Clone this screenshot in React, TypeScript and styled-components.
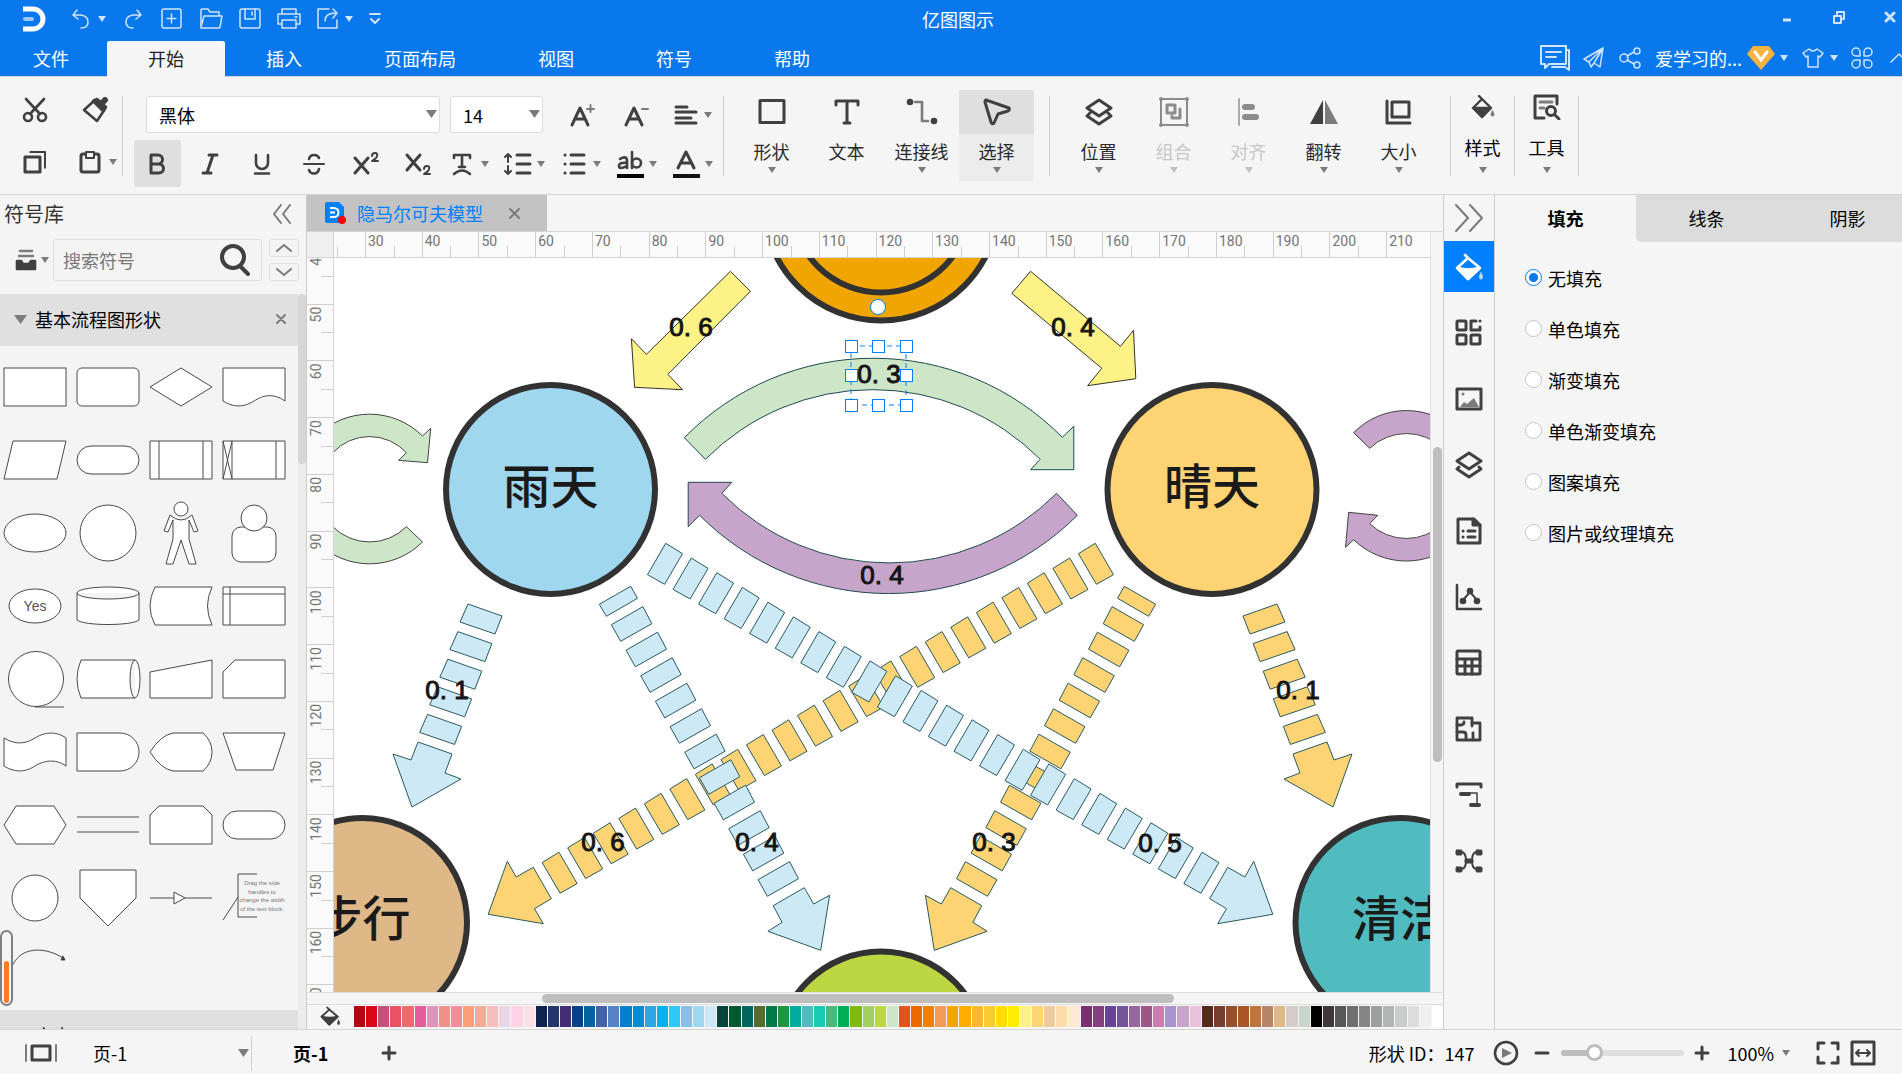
import React from "react";
import styled, { createGlobalStyle, css } from "styled-components";

const BLUE = "#0a78ed";
const ACCENT = "#0080ff";
const INK = "#404040";
const SOFT = "#7b7b7b";
const LINE = "#d4d4d4";
const PANEL = "#f5f5f5";
const FONT = `"Noto Sans CJK SC", "Noto Sans", sans-serif`;
const DIGITS = `Roboto, "Liberation Sans", sans-serif`;

const GlobalStyle = createGlobalStyle`
  * { box-sizing: border-box; }
  body { margin: 0; overflow: hidden; font-family: ${FONT}; font-size: 18px; color: #000; background: ${PANEL}; }
  button, input, select { font: inherit; color: inherit; }
  button { border: 0; padding: 0; background: none; cursor: pointer; }
  svg { display: block; flex: none; }
`;

/* ---------- shell ---------- */

const Shell = styled.div`
  display: flex;
  flex-direction: column;
  height: 100vh;
  overflow: hidden;
`;

const TitleBar = styled.header`
  display: grid;
  grid-template-columns: 1fr auto 1fr;
  height: 41px;
  background: ${BLUE};
  color: #fff;
`;

const QuickBar = styled.div`
  display: flex;
  align-items: center;
  gap: 15px;
  height: 38px;
  padding: 0 0 0 22px;
`;

const QuickGroup = styled.div<{ $after?: number }>`
  display: flex;
  align-items: center;
  gap: 5px;
  margin-right: ${(p) => p.$after ?? 0}px;
`;

const LogoBox = styled.span`
  display: flex;
  margin-right: 8px;
`;

const AppTitle = styled.h1`
  margin: 0;
  padding-left: 14px;
  font-size: 18px;
  line-height: 38px;
  font-weight: 400;
`;

const WindowButtons = styled.div`
  display: flex;
  justify-content: flex-end;
  gap: 27px;
  height: 34px;
`;

const IconButton = styled.button<{ $w?: number }>`
  display: flex;
  align-items: center;
  justify-content: center;
  width: ${(p) => p.$w ?? 24}px;
`;

const MenuBar = styled.nav`
  display: flex;
  justify-content: space-between;
  height: 35px;
  background: ${BLUE};
  color: #fff;
`;

const MenuTabs = styled.div`
  display: flex;
`;

const MenuTab = styled.button<{ $active?: boolean; $first?: boolean }>`
  position: relative;
  height: 36px;
  padding: ${(p) => (p.$first ? "0 38px 2px 33px" : "0 41px 2px")};
  line-height: 34px;
  color: ${(p) => (p.$active ? "#222" : "#fff")};
  background: ${(p) => (p.$active ? PANEL : "transparent")};
  border-radius: 2px 2px 0 0;
`;

const UserArea = styled.div`
  display: flex;
  align-items: center;
  gap: 13px;
  height: 34px;
`;

const UserPair = styled.div`
  display: flex;
  align-items: center;
  gap: 5px;
`;

/* ---------- ribbon ---------- */

const Ribbon = styled.section`
  display: flex;
  height: 119px;
  border-top: 1px solid ${LINE};
  border-bottom: 1px solid ${LINE};
  background: ${PANEL};
`;

const Divider = styled.span`
  width: 1px;
  height: 80px;
  margin-top: 19px;
  background: #cfcfcf;
`;

const ClipboardGroup = styled.div`
  display: grid;
  grid-template: 52px 52px / 46px 60px;
  width: 122px;
  padding: 7px 0 0 12px;
`;

const ClipButton = styled.button<{ $split?: boolean }>`
  display: flex;
  align-items: center;
  justify-content: ${(p) => (p.$split ? "flex-start" : "center")};
  gap: 8px;
  padding-left: ${(p) => (p.$split ? 21 : 0)}px;
`;

const PainterButton = styled(ClipButton)`
  padding-left: 14px;
`;

const FontGroup = styled.div`
  width: 600px;
  padding: 13px 0 0 11px;
`;

const FontRow = styled.div`
  display: flex;
  align-items: center;
  height: 49px;
`;

const BoxRow = styled(FontRow)`
  padding-left: 12px;
`;

const SelectWrap = styled.div<{ $w: number; $after?: number }>`
  position: relative;
  width: ${(p) => p.$w}px;
  margin-right: ${(p) => p.$after ?? 0}px;
  svg {
    position: absolute;
    right: 3px;
    top: 14px;
    pointer-events: none;
  }
`;

const BoxSelect = styled.select`
  appearance: none;
  width: 100%;
  height: 37px;
  padding: 0 12px;
  border: 1px solid #dcdcdc;
  border-radius: 3px;
  background: #fff;
`;

const FormatButton = styled.button<{ $w: number; $on?: boolean }>`
  display: flex;
  align-items: center;
  justify-content: center;
  width: ${(p) => p.$w}px;
  height: 47px;
  border-radius: 2px;
  ${(p) => p.$on && css`background: #dfdfdf; margin-right: 3px;`}
`;

const SplitButton = styled.button`
  display: flex;
  align-items: center;
  gap: 5px;
  width: 56px;
  height: 47px;
  padding-left: 5px;
`;

const ToolGroup = styled.div<{ $pad: number; $end: number }>`
  display: flex;
  padding: 13px ${(p) => p.$end}px 0 ${(p) => p.$pad}px;
`;

const ToolButton = styled.button<{ $on?: boolean; $off?: boolean; $high?: boolean }>`
  display: flex;
  flex-direction: column;
  align-items: center;
  width: ${(p) => (p.$high ? 63 : 75)}px;
  height: 91px;
  border-radius: 2px;
  color: ${(p) => (p.$off ? "#c8c8c8" : p.$high ? "#000" : "#2a2a2a")};
  background: ${(p) => (p.$on ? "#ececec" : "none")};
`;

const ToolIcon = styled.span<{ $on?: boolean; $high?: boolean }>`
  display: flex;
  align-items: center;
  justify-content: center;
  width: 100%;
  height: ${(p) => (p.$high ? 34 : 44)}px;
  background: ${(p) => (p.$on ? "#dfdfdf" : "none")};
`;

const ToolLabel = styled.span<{ $high?: boolean }>`
  margin: ${(p) => (p.$high ? "8px 0 5px" : "2px 0 1px")};
  line-height: 30px;
`;

/* ---------- workspace ---------- */

const Workspace = styled.main`
  display: flex;
  flex: 1;
  min-height: 0;
`;

const Library = styled.aside`
  position: relative;
  display: flex;
  flex-direction: column;
  width: 307px;
  border-right: 1px solid #cdcdcd;
  background: #f4f4f4;
`;

const LibraryHead = styled.div`
  display: flex;
  align-items: center;
  justify-content: space-between;
  height: 37px;
  padding: 0 15px 0 4px;
`;

const LibraryTitle = styled.h2`
  margin: 0;
  font-size: 20px;
  line-height: 36px;
  font-weight: 400;
  color: #333;
`;

const SearchRow = styled.div`
  display: flex;
  height: 62px;
  padding: 7px 7px 13px 15px;
`;

const LibraryMenu = styled.button`
  display: flex;
  flex: none;
  align-items: center;
  gap: 4px;
  width: 38px;
`;

const SearchBox = styled.label`
  display: flex;
  flex: 1;
  align-items: center;
  min-width: 0;
  padding-right: 10px;
  margin-right: 7px;
  border: 1px solid #dedede;
  border-radius: 3px;
`;

const SearchInput = styled.input`
  flex: 1;
  min-width: 0;
  padding: 0 9px;
  border: 0;
  outline: 0;
  background: none;
  &::placeholder { color: #777; opacity: 1; }
`;

const Steppers = styled.div`
  display: flex;
  flex-direction: column;
  justify-content: space-between;
`;

const StepButton = styled.button`
  display: flex;
  align-items: center;
  justify-content: center;
  width: 30px;
  height: 18px;
  border: 1px solid #dedede;
  border-radius: 3px;
`;

const LibraryScroll = styled.div`
  display: flex;
  flex: 1;
  min-height: 0;
`;

const LibraryList = styled.div`
  flex: 1;
  overflow: hidden;
`;

const SectionHead = styled.div`
  display: flex;
  align-items: center;
  height: 52px;
  padding: 0 12px 2px 14px;
  background: #e0e0e0;
`;

const SectionTitle = styled.h3`
  flex: 1;
  margin: 0 0 0 8px;
  font-size: 18px;
  font-weight: 400;
`;

const ShapeGrid = styled.div`
  display: grid;
  grid-template-columns: repeat(4, 73px);
  grid-auto-rows: 73px;
  padding: 5px 0 2px;
`;

const ShapeButton = styled.button`
  display: flex;
`;

const Track = styled.div`
  width: 8px;
  background: #ececec;
`;

const Thumb = styled.div`
  height: 170px;
  border-radius: 4px;
  background: #d6d6d6;
`;

const Gauge = styled.div`
  position: absolute;
  left: 0;
  bottom: 23px;
  display: flex;
  align-items: flex-end;
  width: 13px;
  height: 76px;
  padding: 0 2px 1px;
  border: 2px solid #7f7f7f;
  border-radius: 7px;
  background: #f4f4f4;
`;

const GaugeLevel = styled.span`
  flex: 1;
  height: 42px;
  border-radius: 3px;
  background: #ff7a22;
`;

const Editor = styled.section`
  display: flex;
  flex: 1;
  flex-direction: column;
  min-width: 0;
`;

const DocTabs = styled.div`
  height: 37px;
  border-bottom: 1px solid ${LINE};
`;

const DocTab = styled.div`
  display: flex;
  align-items: center;
  width: 240px;
  height: 36px;
  padding-left: 17px;
  background: #c3c3c3;
  color: ${ACCENT};
`;

const DocName = styled.span`
  margin: 0 25px 0 10px;
`;

const Board = styled.div`
  display: grid;
  grid-template: 26px 1fr / 27px 1fr 13px;
  flex: 1;
  min-height: 0;
`;

const Corner = styled.div`
  background: #efefef;
  border-right: 1px solid ${LINE};
  border-bottom: 1px solid ${LINE};
`;

const TopRuler = styled.div`
  overflow: hidden;
  background: #fafafa;
  border-bottom: 1px solid ${LINE};
`;

const SideRuler = styled.div`
  overflow: hidden;
  background: #fafafa;
  border-right: 1px solid ${LINE};
`;

const Canvas = styled.div`
  overflow: hidden;
  background: #fff;
`;

const VerticalBar = styled.div`
  grid-column: 3;
  grid-row: 1 / 3;
  display: flex;
  flex-direction: column;
  align-items: center;
  padding-top: 215px;
  border-left: 1px solid #e0e0e0;
`;

const VerticalThumb = styled.div`
  width: 9px;
  height: 315px;
  border-radius: 5px;
  background: #bebebe;
`;

const HorizontalBar = styled.div`
  height: 13px;
  padding: 1px 0 0 235px;
  border-top: 1px solid #dedede;
  border-bottom: 1px solid #dedede;
`;

const HorizontalThumb = styled.div`
  width: 632px;
  height: 9px;
  border-radius: 5px;
  background: #bebebe;
`;

const PaletteRow = styled.div`
  display: flex;
  align-items: center;
  height: 24px;
  padding: 0 0 2px 13px;
`;

const Swatches = styled.div`
  display: flex;
  flex: 1;
  gap: 1px;
  margin-left: 14px;
`;

const Swatch = styled.button<{ $c: string }>`
  flex: 1;
  height: 21px;
  background: ${(p) => p.$c};
`;

/* ---------- right side ---------- */

const Rail = styled.nav`
  display: flex;
  flex-direction: column;
  width: 52px;
  border-left: 1px solid #cdcdcd;
  border-right: 1px solid #cdcdcd;
`;

const RailToggle = styled.button`
  display: flex;
  align-items: center;
  justify-content: center;
  height: 46px;
`;

const RailButton = styled.button<{ $on?: boolean }>`
  display: flex;
  align-items: center;
  justify-content: center;
  height: 51px;
  margin-bottom: 15px;
  background: ${(p) => (p.$on ? ACCENT : "none")};
`;

const Inspector = styled.aside`
  width: 407px;
  overflow: hidden;
`;

const InspectorTabs = styled.div`
  display: grid;
  grid-template-columns: repeat(3, 141px);
`;

const InspectorTab = styled.button<{ $on?: boolean; $edge?: boolean }>`
  height: 47px;
  line-height: 47px;
  font-weight: ${(p) => (p.$on ? 700 : 400)};
  background: ${(p) => (p.$on ? PANEL : "#dcdcdc")};
  border-radius: ${(p) => (p.$edge ? "0 0 0 5px" : "0")};
`;

const FillOptions = styled.fieldset`
  display: flex;
  flex-direction: column;
  margin: 0;
  padding: 10px 0 0 30px;
  border: 0;
`;

const FillOption = styled.label`
  display: flex;
  align-items: center;
  gap: 6px;
  height: 51px;
`;

const Radio = styled.input`
  appearance: none;
  width: 17px;
  height: 17px;
  margin: 0;
  border: 1px solid #c4c4c4;
  border-radius: 50%;
  background: #fff;
  &:checked {
    border-color: ${ACCENT};
    background: radial-gradient(circle, ${BLUE} 4px, #fff 5px);
  }
`;

/* ---------- status bar ---------- */

const StatusBar = styled.footer`
  display: flex;
  align-items: center;
  justify-content: space-between;
  height: 45px;
  padding: 2px 16px 0 24px;
  border-top: 1px solid ${LINE};
`;

const StatusSide = styled.div`
  display: flex;
  align-items: center;
`;

const PageSelect = styled.div`
  position: relative;
  width: 194px;
  height: 35px;
  border-right: 1px solid #d0d0d0;
  svg {
    position: absolute;
    right: 2px;
    top: 13px;
    pointer-events: none;
  }
`;

const PageField = styled.select`
  appearance: none;
  width: 100%;
  height: 35px;
  padding: 0 0 0 35px;
  border: 0;
  background: none;
`;

const PageTab = styled.button`
  margin: 0 52px 0 41px;
  font-weight: 700;
`;

const ShapeId = styled.span`
  margin-right: 5px;
  white-space: pre;
`;

const ZoomSlider = styled.input`
  appearance: none;
  width: 123px;
  height: 18px;
  margin: 0 9px 0 10px;
  background: none;
  &::-webkit-slider-runnable-track {
    height: 6px;
    border-radius: 3px;
    background: linear-gradient(to right, #bdbdbd 27%, #dedede 27%);
  }
  &::-webkit-slider-thumb {
    appearance: none;
    width: 17px;
    height: 17px;
    margin-top: -6px;
    border: 3px solid #bdbdbd;
    border-radius: 50%;
    background: #fff;
  }
`;

const ZoomButton = styled.button`
  display: flex;
  align-items: center;
  gap: 8px;
  margin: 0 26px 0 16px;
`;

/* ---------- small drawings ---------- */

type IcoProps = {
  w?: number;
  h?: number;
  box?: string;
  c?: string;
  s?: number;
  children: React.ReactNode;
};

const Ico = ({ w = 24, h = 24, box, c = INK, s = 3, children }: IcoProps) => (
  <svg
    width={w}
    height={h}
    viewBox={box ?? `0 0 ${w} ${h}`}
    fill="none"
    stroke={c}
    strokeWidth={s}
    strokeLinecap="round"
    strokeLinejoin="round"
    aria-hidden="true"
  >
    {children}
  </svg>
);

const Caret = ({ w = 8, h = 6, c = SOFT }: { w?: number; h?: number; c?: string }) => (
  <svg width={w} height={h} viewBox="0 0 8 6" preserveAspectRatio="none" aria-hidden="true">
    <path d="M0 0H8L4 6Z" fill={c} />
  </svg>
);

const Q = "#cfe3fb";

const Bucket = ({ size, c, drop }: { size: number; c: string; drop: string }) => (
  <Ico w={size} h={size} box="0 0 28 28" c={c} s={2.6}>
    <path d="M10 2L13 5" />
    <path d="M13 5L25 15L13 26L2 15Z" />
    <path d="M3 15Q13 18 24 15L13 26Z" fill={c} />
    <path d="M26 20C28 23 28 26 26 26S24 23 26 20Z" fill={drop} stroke={drop} strokeWidth={1} />
  </Ico>
);

const ToolBucket = () => (
  <Ico w={24} h={24} s={2.4}>
    <path d="M8 1L11 4L20 13L11 22L2 13L11 4" />
    <path d="M3 13H19L11 22Z" fill={INK} />
    <path d="M21.500 16C23.500 19 23.500 21 21.500 21S19.500 19 21.500 16Z" fill={SOFT} stroke={SOFT} strokeWidth={1} />
  </Ico>
);

/* ---------- diagram data ---------- */

type Pt = [number, number];

const pts = (list: Pt[]) => list.map((p) => p.join(",")).join(" ");

const striped = (first: Pt[], step: Pt, count: number): Pt[][] =>
  Array.from({ length: count }, (_, i) => first.map(([x, y]) => [x + step[0] * i, y + step[1] * i] as Pt));

const shortArrow: Pt[][] = [
  ...striped([[468, 604], [502, 616], [495, 634], [460, 622]], [-10.1, 27.6], 5),
  [[418, 742], [452, 754], [445, 773], [461, 779], [412, 807], [393, 754], [411, 760]],
];

const longArrow: Pt[][] = [
  ...striped([[665.7, 543.3], [682.5, 553.7], [664.6, 584.3], [647.5, 574.7]], [25.54, 14.71], 22),
  [[1227.7, 867.3], [1244.9, 877], [1253.7, 861.3], [1272.8, 914.3], [1217.7, 923.7], [1226.5, 908.7], [1209.7, 898.7]],
];

const steepArrow: Pt[][] = [
  [[630.7, 586.3], [637.5, 598.3], [606.4, 616.3], [599.3, 604.3]],
  ...striped([[642.9, 606.7], [651.8, 623.7], [620.7, 641.3], [611.4, 624.7]], [14.67, 25.5], 11),
  [[804.3, 887.7], [813.6, 904], [829.6, 895.3], [820.7, 950.3], [767.9, 931.3], [782.1, 922.3], [773.2, 905.7]],
];

const mirror = (shape: Pt[][], sum: number): Pt[][] => shape.map((poly) => poly.map(([x, y]) => [sum - x, y] as Pt));

const Poly = ({ shape, fill }: { shape: Pt[][]; fill: string }) => (
  <g fill={fill} stroke="#2a5a60" strokeWidth={1}>
    {shape.map((poly, i) => (
      <polygon key={i} points={pts(poly)} />
    ))}
  </g>
);

const nodes = [
  { x: 550.5, y: 489.5, fill: "#9fd7ee", name: "雨天", ty: 504 },
  { x: 1212, y: 489.5, fill: "#fdd374", name: "晴天", ty: 504 },
  { x: 362.5, y: 922.5, fill: "#deb887", name: "步行", ty: 936 },
  { x: 1400, y: 922.5, fill: "#50bcc0", name: "清洁", ty: 936 },
  { x: 881, y: 1056, fill: "#bdd743", name: "", ty: 0 },
];

const weights: [string, number, number][] = [
  ["0. 6", 691, 336],
  ["0. 4", 1073, 336],
  ["0. 3", 879, 383],
  ["0. 4", 882, 584],
  ["0. 1", 447, 699],
  ["0. 1", 1298, 699],
  ["0. 6", 603, 851],
  ["0. 4", 757, 851],
  ["0. 3", 994, 851],
  ["0. 5", 1160, 852],
];

const handles: Pt[] = [
  [851, 346], [878, 346], [906, 346],
  [851, 375], [906, 375],
  [851, 405], [878, 405], [906, 405],
];

const Diagram = () => (
  <svg width="100%" height="100%" role="img" aria-label="隐马尔可夫模型">
    <g transform="translate(-334 -258)">
      <g stroke="#323232" strokeWidth={6} fill="#f1a500">
        <circle cx={881} cy={203} r={117.500} />
        <circle cx={881} cy={203} r={89.500} />
      </g>
      {nodes.map((n) => (
        <circle key={n.x} cx={n.x} cy={n.y} r={104.500} fill={n.fill} stroke="#323232" strokeWidth={6} />
      ))}
      <g fill="#fcf285" stroke="#333" strokeWidth={1}>
        <polygon points="730.4,271.3 750.4,291.3 667.9,374.3 682.5,389.7 634.6,387.3 631.4,338.7 646.4,354.3" />
        <polygon points="1030.6,271.3 1120.5,346.3 1133.5,330.3 1135.8,378.7 1087.6,385.7 1101.8,368.3 1011.8,293.3" />
      </g>
      <path
        d="M684.3 437.700A265 265 0 0 1 1062.3 437.300L1073.8 426.300V469.700H1030.6L1040.2 459.300A236 236 0 0 0 705.4 459.300Z"
        fill="#cde6c7"
        stroke="#1f4a4f"
      />
      <path
        d="M688.2 482.300H731.8L721.8 493.300A236 236 0 0 0 1056.6 493.300L1077.3 515.300A267 267 0 0 1 699.6 515.300L688.2 526.700Z"
        fill="#c7a4c9"
        stroke="#1f4a4f"
      />
      <g fill="#cde6c7" stroke="#444">
        <path d="M316.7 436A75 75 0 0 1 422.5 436L430.7 428.300L427.5 462.700L398.6 460.300L406.4 452.700A50 50 0 0 0 332.8 452.700Z" />
        <path d="M316.7 542A75 75 0 0 0 422.5 542L406.4 526.700A52 52 0 0 1 332.8 526.700Z" />
      </g>
      <g fill="#c7a4c9" stroke="#444">
        <path d="M1353.6 432.700A74 74 0 0 1 1459.2 432.700L1443.1 448.300A53 53 0 0 0 1369.7 448.300Z" />
        <path d="M1348.6 512.300L1377.7 515.300L1369.7 523.700A53 53 0 0 0 1443.1 523.700L1459.2 539.700A76 76 0 0 1 1353.6 539.700L1345.5 547.300Z" />
      </g>
      <Poly shape={mirror(shortArrow, 1745)} fill="#fdd374" />
      <Poly shape={mirror(longArrow, 1761)} fill="#fdd374" />
      <Poly shape={mirror(steepArrow, 1755)} fill="#fdd374" />
      <Poly shape={shortArrow} fill="#cde9f5" />
      <Poly shape={steepArrow} fill="#cde9f5" />
      <Poly shape={longArrow} fill="#cde9f5" />
      <g fontFamily={FONT} fontSize={48} textAnchor="middle" fill="#1a1a1a">
        {nodes.filter((n) => n.name).map((n) => (
          <text key={n.name} x={n.x} y={n.ty} fontWeight={500}>{n.name}</text>
        ))}
      </g>
      <g
        fontFamily={`"Liberation Sans", Arial, sans-serif`}
        fontSize={26}
        textAnchor="middle"
        fill="#151515"
        stroke="#151515"
        strokeWidth={1}
      >
        {weights.map(([t, x, y]) => (
          <text key={`${x}-${y}`} x={x} y={y}>{t}</text>
        ))}
      </g>
      <g stroke={ACCENT} fill="#fff">
        <rect x={851} y={346} width={55} height={59} fill="none" strokeDasharray="5 4" />
        {handles.map(([x, y]) => (
          <rect key={`${x}-${y}`} x={x - 5.500} y={y - 5.500} width={12} height={12} />
        ))}
        <circle cx={878} cy={307} r={7.500} />
      </g>
    </g>
  </svg>
);

const PITCH = 56.73;

const HRuler = () => (
  <svg width="100%" height="26" aria-hidden="true">
    <g stroke="#cfcfcf" shapeRendering="crispEdges">
      {Array.from({ length: 19 }, (_, i) => (
        <path key={i} d={`M${31.5 + i * PITCH} 0V26M${3.3 + i * PITCH} 14V26`} />
      ))}
    </g>
    <g fill="#757575" fontSize={14} fontFamily={DIGITS}>
      {Array.from({ length: 19 }, (_, i) => (
        <text key={i} x={34 + i * PITCH} y={14}>{30 + i * 10}</text>
      ))}
    </g>
  </svg>
);

const VRuler = () => (
  <svg width="26" height="100%" aria-hidden="true">
    <g stroke="#cfcfcf" shapeRendering="crispEdges">
      {Array.from({ length: 14 }, (_, i) => (
        <path key={i} d={`M0 ${-10.5 + i * PITCH}H26M14 ${18 + i * PITCH}H26`} />
      ))}
    </g>
    <g fill="#757575" fontSize={14} fontFamily={DIGITS} textAnchor="end">
      {Array.from({ length: 14 }, (_, i) => (
        <text key={i} transform={`translate(14 ${-8 + i * PITCH}) rotate(-90)`}>{40 + i * 10}</text>
      ))}
    </g>
  </svg>
);

/* ---------- symbol library ---------- */

const noFill = { fill: "none" };

const symbols: [string, React.ReactNode][] = [
  ["流程", <rect x={-31} y={-19} width={62} height={38} />],
  ["圆角矩形", <rect x={-31} y={-19} width={62} height={38} rx={5} />],
  ["判定", <path d="M0-19L31 0L0 19L-31 0Z" />],
  ["文档", <path d="M-31-19H31V14C18 5 8 9 0 14S-18 22-31 14Z" />],
  ["数据", <path d="M-31 19L-22-19H31L22 19Z" />],
  ["开始或结束", <rect x={-31} y={-14} width={62} height={28} rx={14} />],
  ["预定义流程", <path d="M-31-19H31V19H-31ZM-22-19V19M22-19V19" />],
  ["预备操作", <path d="M-31-19H31V19H-31ZM-22-19V19M22-19V19M-31-19L-22 19M-22-19L-31 19" />],
  ["椭圆", <ellipse rx={31} ry={19} />],
  ["圆", <circle r={28} />],
  [
    "人",
    <>
      <circle cy={-24} r={7} />
      <path d="M-11-18L-17-2L-13-1L-8-13V6L-15 31H-8L0 7L8 31H15L8 6V-13L13-1L17-2L11-18Q0-8-11-18Z" />
    </>,
  ],
  [
    "用户",
    <>
      <rect x={-22} y={-6} width={44} height={35} rx={9} />
      <circle cy={-15} r={13} />
    </>,
  ],
  [
    "是",
    <>
      <ellipse rx={26} ry={17} />
      <text y={5} fontSize={14} textAnchor="middle" fill="#555" stroke="none" fontFamily={`"Liberation Sans", Arial, sans-serif`}>Yes</text>
    </>,
  ],
  ["数据库", <path d="M-31-13V14C-24 20 24 20 31 14V-13M-31-13A31 6 0 0 1 31-13A31 6 0 0 1-31-13Z" />],
  ["存储数据", <path d="M-26-19H31Q22 0 31 19H-26Q-36 0-26-19Z" />],
  ["内部存储", <path d="M-31-19H31V19H-31ZM-24-19V19M-31-12H31" />],
  [
    "顺序数据",
    <>
      <circle cx={1} r={27.500} />
      <path d="M0 28H29" />
    </>,
  ],
  ["直接数据", <path d="M27-19H-27Q-35 0-27 19H27M27-19A5 19 0 0 1 27 19A5 19 0 0 1 27-19Z" />],
  ["手动输入", <path d="M-31-7L31-19V19H-31Z" />],
  ["卡片", <path d="M-31-7L-19-19H31V19H-31Z" />],
  ["纸带", <path d="M-31-14C-18-6-8-9 0-14S20-22 31-14V14C20 6 8 9 0 14S-18 22-31 14Z" />],
  ["延期", <path d="M-31-19H12A19 19 0 0 1 12 19H-31Z" />],
  ["显示", <path d="M-31 0Q-20-17-8-19H22Q31-11 31 0T22 19H-8Q-20 17-31 0Z" />],
  ["手动操作", <path d="M-31-19H31L19 18H-18Z" />],
  ["准备", <path d="M-31 0L-19-19H19L31 0L19 19H-19Z" />],
  ["并行模式", <path d="M-31-8H31M-31 7H31" />],
  ["循环界限", <path d="M-31-10L-22-19H22L31-10V19H-31Z" />],
  ["终结符", <rect x={-31} y={-14} width={62} height={28} rx={14} />],
  ["页面内引用", <circle r={23} />],
  ["跨页引用", <path d="M-28-28H28V0L0 28L-28 0Z" />],
  ["流线", <path d="M-31 0H-7M4 0H31M-7-6L4 0L-7 6Z" />],
  [
    "注释",
    <>
      <path d="M3-24H-16V19H3M-16-1L-31 22" {...noFill} />
      <g fontSize={6} textAnchor="middle" fill="#777" stroke="none" fontFamily={`"Liberation Sans", Arial, sans-serif`}>
        <text x={8} y={-13}>Drag the side</text>
        <text x={8} y={-4}>handles to</text>
        <text x={8} y={4}>change the width</text>
        <text x={8} y={13}>of the text block.</text>
      </g>
    </>,
  ],
  [
    "弧线",
    <>
      <path d="M-26 10C-24-26 8-26 28-13" {...noFill} />
      <path d="M30-11L26-11L28-15Z" fill="#333" />
    </>,
  ],
];

const palette = (
  "b50614 d90718 c95079 e85362 ec6a70 e65c9d e194b9 f0908a ee8f9b ff9f78 f2ab97 f6bdbd ead4e8 fdd3e5 fde0e6 " +
  "11214f 23376d 432d75 074185 04629f 4163ac 5582c3 0280cf 048bd2 2ea7e0 00b3f0 30c8fa 89bfe9 9fd7ee cde9f5 " +
  "04433a 005a30 00645f 556b2f 007a45 1f953d 00aea0 50bcc0 1bccb4 48ba7e 00ae55 7fba10 a1cf62 bdd743 cde6c7 " +
  "e15420 ec6900 f18200 f39a55 f1a500 ffae00 fdb830 f9cb31 ffdd00 ffee00 fcf285 fdd374 eacd9a fddcac fce8d3 " +
  "7b3070 84407f 68429a 735399 9966a0 9b5887 cf7bb1 ab93cf c7a4c9 ebc2dc 57291b 763d30 94502c ac5528 c0753e " +
  "b58569 deb887 d4ccc8 c9d4cb 000000 3e3839 585757 6f6f6f 868686 9d9f9f b3b5b5 cbcdcd dcdcdc efefef ffffff"
).split(" ");

/* ---------- sections ---------- */

const Header = () => (
  <>
    <TitleBar>
      <QuickBar>
        <LogoBox>
          <svg width="24" height="26" viewBox="0 0 24 26" aria-hidden="true">
            <path d="M1 3H11A10 10 0 0 1 11 23H1" fill="none" stroke="#fff" strokeWidth={5} />
            <rect x={1} y={11} width={11} height={4} rx={2} fill="#9cc8f8" />
          </svg>
        </LogoBox>
        <QuickGroup>
          <IconButton aria-label="撤销">
            <Ico w={22} h={22} c={Q} s={1.5}><path d="M7 2L3 7L8 11M3 7H11Q18 8 18 14Q18 20 11 20" /></Ico>
          </IconButton>
          <Caret c={Q} />
        </QuickGroup>
        <IconButton aria-label="重做">
          <Ico w={22} h={22} c={Q} s={1.5}><path d="M15 2L19 7L14 11M19 7H11Q4 8 4 14Q4 20 11 20" /></Ico>
        </IconButton>
        <IconButton aria-label="新建">
          <Ico w={22} h={22} c={Q} s={1.5}><rect x={1} y={1} width={19} height={19} rx={2} /><path d="M10.500 6V15M6 10.500H15" /></Ico>
        </IconButton>
        <IconButton aria-label="打开">
          <Ico w={24} h={22} c={Q} s={1.5}><path d="M2 20V2Q2 1 3 1H9L11 4H20V8M2 19L5 8H23L21 19Q21 20 20 20H3Q2 20 2 19" /></Ico>
        </IconButton>
        <IconButton aria-label="保存">
          <Ico w={22} h={22} c={Q} s={1.5}><rect x={1} y={1} width={20} height={19} rx={2} /><path d="M6 1V11H16V1M13 4V7" /></Ico>
        </IconButton>
        <IconButton aria-label="打印">
          <Ico w={24} h={22} c={Q} s={1.5}><path d="M5 6V1H19V6M5 16H1V6H23V16H19M5 12H19V20H5ZM18 9H20" /></Ico>
        </IconButton>
        <QuickGroup>
          <IconButton aria-label="导出">
            <Ico w={22} h={22} c={Q} s={1.5}><path d="M12 1H1V20H20V12M8 13Q8 5 19 5M16 1L20 5L16 10" /></Ico>
          </IconButton>
          <Caret c={Q} />
        </QuickGroup>
        <IconButton $w={14} aria-label="自定义快速访问">
          <Ico w={14} h={14} c={Q} s={2}><path d="M2 2H12M3 7L7 11L11 7" /></Ico>
        </IconButton>
      </QuickBar>
      <AppTitle>亿图图示</AppTitle>
      <WindowButtons>
        <IconButton aria-label="最小化"><Ico w={12} h={14} c={Q} s={3}><path d="M1 10H9" strokeLinecap="butt" /></Ico></IconButton>
        <IconButton aria-label="还原"><Ico w={14} h={14} c={Q} s={2}><path d="M2 6H9V13H2ZM5 5V2H12V9H10" /></Ico></IconButton>
        <IconButton aria-label="关闭"><Ico w={12} h={14} c={Q} s={3}><path d="M2 3L10 11M10 3L2 11" /></Ico></IconButton>
      </WindowButtons>
    </TitleBar>
    <MenuBar>
      <MenuTabs>
        {["文件", "开始", "插入", "页面布局", "视图", "符号", "帮助"].map((t, i) => (
          <MenuTab key={t} $first={i === 0} $active={i === 1}>{t}</MenuTab>
        ))}
      </MenuTabs>
      <UserArea>
        <IconButton $w={30} aria-label="消息">
          <Ico w={30} h={26} c={Q} s={2}><path d="M1 1H26V19H9L5 23V19H1ZM6 7H21M6 12H16M27 5H29V25L25 22H12" /></Ico>
        </IconButton>
        <IconButton $w={22} aria-label="发送">
          <Ico w={22} h={22} c={Q} s={1.5}><path d="M20 1L1 12L6 15L20 1L17 20L11 16L8 20L6 15M11 16L20 1" /></Ico>
        </IconButton>
        <IconButton $w={24} aria-label="分享">
          <Ico w={22} h={22} c={Q} s={1.5}><circle cx={5} cy={11} r={4} /><circle cx={18} cy={4} r={3} /><circle cx={18} cy={18} r={3} /><path d="M8 9L15 5M8 13L15 17" /></Ico>
        </IconButton>
        <UserPair>
          <button>爱学习的...</button>
          <svg width="28" height="26" viewBox="0 0 28 26" aria-hidden="true">
            <path d="M6 1H22L28 9L14 25L0 9Z" fill="#f5b340" />
            <path d="M8 7L14 15L20 7" fill="none" stroke="#fff" strokeWidth={3} strokeLinecap="round" />
          </svg>
          <Caret c={Q} />
        </UserPair>
        <UserPair>
          <IconButton aria-label="主题">
            <Ico w={22} h={22} c={Q} s={1.5}><path d="M7 2Q11 6 15 2L21 6L18 10L16 9V20H6V9L4 10L1 6Z" /></Ico>
          </IconButton>
          <Caret c={Q} />
        </UserPair>
        <IconButton $w={22} aria-label="应用">
          <Ico w={22} h={22} c={Q} s={1.5}>
            <path d="M9 9H5A4 4 0 1 1 9 5ZM13 9H17A4 4 0 1 0 13 5ZM9 13H5A4 4 0 1 0 9 17ZM13 13H17A4 4 0 1 1 13 17Z" />
          </Ico>
        </IconButton>
        <IconButton $w={16} aria-label="收起功能区">
          <Ico w={16} h={22} c={Q} s={1.5}><path d="M5 15L13 7L21 15" /></Ico>
        </IconButton>
      </UserArea>
    </MenuBar>
  </>
);

type ToolProps = { label: string; icon: React.ReactNode; on?: boolean; off?: boolean; high?: boolean; plain?: boolean };

const Tool = ({ label, icon, on, off, high, plain }: ToolProps) => (
  <ToolButton $on={on} $off={off} $high={high} disabled={off}>
    <ToolIcon $on={on} $high={high}>{icon}</ToolIcon>
    <ToolLabel $high={high}>{label}</ToolLabel>
    {!plain && <Caret c={off ? "#c0c0c0" : SOFT} />}
  </ToolButton>
);

const RibbonBar = () => (
  <Ribbon>
    <ClipboardGroup>
      <ClipButton aria-label="剪切">
        <Ico w={26} h={26} s={2.6}><circle cx={6} cy={20} r={4} /><circle cx={20} cy={20} r={4} /><path d="M4 2L18 17M22 2L8 17" /></Ico>
      </ClipButton>
      <PainterButton aria-label="格式刷">
        <Ico w={28} h={26} s={2.6}><path d="M24 3L19 8" strokeWidth={6} /><path d="M3 13L14 3L24 12L16 24Z" /><path d="M12 4L16 2L25 10L22 14Z" fill={INK} /></Ico>
      </PainterButton>
      <ClipButton aria-label="复制">
        <Ico w={24} h={24} s={3}><rect x={2} y={7} width={15} height={15} /><path d="M7 2H22V18" strokeWidth={2} stroke={SOFT} /><path d="M8 2H22V17" strokeWidth={2} /></Ico>
      </ClipButton>
      <ClipButton $split aria-label="粘贴">
        <Ico w={22} h={24} s={3}><rect x={2} y={4} width={18} height={18} rx={2} /><rect x={7} y={2} width={8} height={6} fill={PANEL} strokeWidth={2} /></Ico>
        <Caret />
      </ClipButton>
    </ClipboardGroup>
    <Divider />
    <FontGroup>
      <BoxRow>
        <SelectWrap $w={294} $after={10}>
          <BoxSelect aria-label="字体"><option>黑体</option></BoxSelect>
          <Caret w={11} h={8} />
        </SelectWrap>
        <SelectWrap $w={93} $after={13}>
          <BoxSelect aria-label="字号"><option>14</option></BoxSelect>
          <Caret w={11} h={8} />
        </SelectWrap>
        <FormatButton $w={54} aria-label="增大字号">
          <Ico w={26} h={24}><path d="M2 22L10 5L18 22M5 16H15" /><path d="M17 6H24M20.500 2V9" stroke={SOFT} strokeWidth={2} /></Ico>
        </FormatButton>
        <FormatButton $w={54} aria-label="减小字号">
          <Ico w={26} h={24}><path d="M2 22L10 5L18 22M5 16H15" /><path d="M18 6H24" stroke={SOFT} strokeWidth={2} /></Ico>
        </FormatButton>
        <SplitButton aria-label="对齐方式">
          <Ico w={30} h={24} s={3}><path d="M7 4H18M7 9H27M7 15H22M7 20H27" /></Ico>
          <Caret />
        </SplitButton>
      </BoxRow>
      <FontRow>
        <FormatButton $w={47} $on aria-label="加粗">
          <Ico s={3}><path d="M6 3H13A4 4 0 0 1 13 12H6ZM6 12H14A4.500 4.500 0 0 1 14 21H6Z" /></Ico>
        </FormatButton>
        <FormatButton $w={52} aria-label="倾斜"><Ico s={3}><path d="M11 3H19M5 21H13M15 3L9 21" /></Ico></FormatButton>
        <FormatButton $w={52} aria-label="下划线"><Ico s={2.6}><path d="M6 3V11A6 6 0 0 0 18 11V3M5 21.500H19" /></Ico></FormatButton>
        <FormatButton $w={52} aria-label="删除线">
          <Ico s={2.6}><path d="M17 6Q16 3 12 3T7 7M7 18Q8 21.500 12 21.500T17 17" /><path d="M2 12H22" strokeWidth={2} /></Ico>
        </FormatButton>
        <FormatButton $w={52} aria-label="上标">
          <Ico w={28} h={26}><path d="M3 7L16 22M16 7L3 22" /><path d="M20 5Q20 2 23 2T25 5Q25 7 20 10H26" strokeWidth={2} /></Ico>
        </FormatButton>
        <FormatButton $w={52} aria-label="下标">
          <Ico w={28} h={26}><path d="M3 4L16 19M16 4L3 19" /><path d="M20 18Q20 15 23 15T25 18Q25 20 20 23H26" strokeWidth={2} /></Ico>
        </FormatButton>
        <SplitButton aria-label="文字效果">
          <Ico w={28} h={26} s={2.6}><path d="M6 7V4H22V7M14 4V16M11 16H17M6 23Q14 16 22 23" /></Ico>
          <Caret />
        </SplitButton>
        <SplitButton aria-label="行距">
          <Ico w={28} h={26}><path d="M13 4H26M13 13H26M13 22H26" /><path d="M4 3V11M4 15V23M1 6L4 3L7 6M1 20L4 23L7 20" strokeWidth={2} /></Ico>
          <Caret />
        </SplitButton>
        <SplitButton aria-label="项目符号">
          <Ico w={28} h={26}><path d="M11 4H24M11 13H24M11 22H24M5 4H5.100M5 13H5.100M5 22H5.100" /></Ico>
          <Caret />
        </SplitButton>
        <SplitButton aria-label="突出显示">
          <Ico w={28} h={30} s={2.6}>
            <path d="M4 10Q11 6 11 12V19M11 14Q3 13 3 17T11 17M16 3V19" /><circle cx={20.500} cy={14} r={4.500} />
            <path d="M1 27H28" stroke="#000" strokeWidth={4} strokeLinecap="butt" />
          </Ico>
          <Caret />
        </SplitButton>
        <SplitButton aria-label="字体颜色">
          <Ico w={28} h={30}><path d="M6 19L14 3L22 19M9 14H19" /><path d="M1 27H28" stroke="#111" strokeWidth={4} strokeLinecap="butt" /></Ico>
          <Caret />
        </SplitButton>
      </FontRow>
    </FontGroup>
    <Divider />
    <ToolGroup $pad={10} $end={15}>
      <Tool label="形状" icon={<Ico w={28} h={26}><rect x={2} y={1.500} width={24} height={22} /></Ico>} />
      <Tool label="文本" plain icon={<Ico w={26} h={26}><path d="M2 6V2H24V6M13 2V24M10 24H16" /></Ico>} />
      <Tool
        label="连接线"
        icon={<Ico w={32} h={28} s={2.6}><path d="M9 4H16V23H22" stroke={SOFT} /><circle cx={4} cy={4} r={2} fill={INK} /><circle cx={28} cy={23} r={2} fill={INK} /></Ico>}
      />
      <Tool label="选择" on icon={<Ico w={28} h={28}><path d="M3 2L26 10Q27 12 25 13L15 16L11 25Q9 27 8 24L2 4Q2 2 3 2Z" /></Ico>} />
    </ToolGroup>
    <Divider />
    <ToolGroup $pad={11} $end={14}>
      <Tool label="位置" icon={<Ico w={28} h={28}><path d="M14 2L26 10L14 18L2 10ZM5 15L2 18L14 26L26 18L23 15" /></Ico>} />
      <Tool
        label="组合"
        off
        icon={
          <Ico w={30} h={30} c="#8c8c8c" s={2}>
            <rect x={2} y={2} width={26} height={26} />
            {[[2, 2], [28, 2], [2, 28], [28, 28]].map(([x, y]) => <circle key={`${x}-${y}`} cx={x} cy={y} r={1} fill={PANEL} />)}
            <path d="M8 8H16V16H8ZM21 12V21H13V19" strokeWidth={3} />
          </Ico>
        }
      />
      <Tool label="对齐" off icon={<Ico w={24} h={28} c="#8c8c8c" s={6}><path d="M2 1V27" strokeWidth={2} stroke="#aaa" /><path d="M8 9H15M8 19H19" /></Ico>} />
      <Tool label="翻转" icon={<Ico w={28} h={26} s={0}><path d="M13 1V25H0Z" fill={INK} /><path d="M15 1V25H28Z" fill={SOFT} /></Ico>} />
      <Tool label="大小" icon={<Ico w={28} h={26}><path d="M2 2V24H25" /><rect x={7} y={3} width={17} height={15} /></Ico>} />
    </ToolGroup>
    <Divider />
    <ToolGroup $pad={0} $end={0}>
      <Tool label="样式" high icon={<ToolBucket />} />
    </ToolGroup>
    <Divider />
    <ToolGroup $pad={0} $end={0}>
      <Tool
        label="工具"
        high
        icon={<Ico w={28} h={26}><path d="M24 10V2H2V24H11" /><path d="M7 8H19M7 14H11" stroke={SOFT} /><circle cx={18} cy={17} r={4.500} /><path d="M22 21L26 25" /></Ico>}
      />
    </ToolGroup>
    <Divider />
  </Ribbon>
);

const LibraryPanel = () => (
  <Library>
    <LibraryHead>
      <LibraryTitle>符号库</LibraryTitle>
      <button aria-label="收起符号库"><Ico w={18} h={20} c={SOFT} s={2}><path d="M8 1L1 10L8 19M17 1L10 10L17 19" /></Ico></button>
    </LibraryHead>
    <SearchRow>
      <LibraryMenu aria-label="符号库菜单">
        <Ico w={22} h={24} s={2.6}>
          <path d="M5 3H17M4 8H18" stroke={SOFT} />
          <path d="M2 13H6L8 16H14L16 13H20V21H2Z" fill={INK} />
        </Ico>
        <Caret />
      </LibraryMenu>
      <SearchBox>
        <SearchInput placeholder="搜索符号" aria-label="搜索符号" />
        <Ico w={32} h={34} s={4}><circle cx={14} cy={14} r={11} /><path d="M22 24L29 31" /></Ico>
      </SearchBox>
      <Steppers>
        <StepButton aria-label="上一个"><Ico w={16} h={10} c={SOFT} s={2}><path d="M1 8L8 2L15 8" /></Ico></StepButton>
        <StepButton aria-label="下一个"><Ico w={16} h={10} c={SOFT} s={2}><path d="M1 2L8 8L15 2" /></Ico></StepButton>
      </Steppers>
    </SearchRow>
    <LibraryScroll>
      <LibraryList>
        <SectionHead>
          <Caret w={13} h={9} />
          <SectionTitle>基本流程图形状</SectionTitle>
          <button aria-label="关闭分组"><Ico w={10} h={10} c={SOFT} s={2}><path d="M1 1L9 9M9 1L1 9" /></Ico></button>
        </SectionHead>
        <ShapeGrid>
          {symbols.map(([name, art]) => (
            <ShapeButton key={name} aria-label={name}>
              <svg width="70" height="73" viewBox="-35 -36 70 73" fill="#fff" stroke="#4a4a4a" strokeWidth={1} aria-hidden="true">{art}</svg>
            </ShapeButton>
          ))}
        </ShapeGrid>
        <SectionHead>
          <Caret w={13} h={9} />
          <SectionTitle>文本</SectionTitle>
        </SectionHead>
      </LibraryList>
      <Track><Thumb /></Track>
    </LibraryScroll>
    <Gauge><GaugeLevel /></Gauge>
  </Library>
);

const EditorPanel = () => (
  <Editor>
    <DocTabs>
      <DocTab>
        <svg width="23" height="24" viewBox="0 0 23 24" aria-hidden="true">
          <path d="M3 1H15L20 6V20Q20 22 18 22H3Q1 22 1 20V3Q1 1 3 1Z" fill={ACCENT} />
          <path d="M6 7H10A4 4 0 0 1 10 16H6M6 11.500H11" fill="none" stroke="#fff" strokeWidth={2} />
          <circle cx={18} cy={19} r={4} fill="#f00" />
        </svg>
        <DocName>隐马尔可夫模型</DocName>
        <button aria-label="关闭文档"><Ico w={12} h={12} c={SOFT} s={2}><path d="M2 2L11 11M11 2L2 11" /></Ico></button>
      </DocTab>
    </DocTabs>
    <Board>
      <Corner />
      <TopRuler><HRuler /></TopRuler>
      <VerticalBar><VerticalThumb /></VerticalBar>
      <SideRuler><VRuler /></SideRuler>
      <Canvas><Diagram /></Canvas>
    </Board>
    <HorizontalBar><HorizontalThumb /></HorizontalBar>
    <PaletteRow>
      <Bucket size={20} c={INK} drop={INK} />
      <Swatches>
        {palette.map((c) => <Swatch key={c} $c={`#${c}`} aria-label={`#${c}`} />)}
      </Swatches>
    </PaletteRow>
  </Editor>
);

const railIcons: [string, React.ReactNode][] = [
  ["填充", <Bucket size={28} c="#fff" drop="#b9dcff" />],
  ["符号", <Ico w={28} h={28}><rect x={2} y={2} width={9} height={9} rx={1} /><path d="M21 2H16V11H25V8M25 2V2.100" /><rect x={2} y={16} width={9} height={9} rx={1} /><rect x={16} y={16} width={9} height={9} rx={1} /></Ico>],
  ["图片", <Ico w={28} h={26}><rect x={2} y={3} width={24} height={20} /><path d="M5 21L9 16L12 18L19 12L24 21Z" fill={SOFT} stroke="none" /><circle cx={8} cy={8} r={1.500} fill={SOFT} stroke="none" /></Ico>],
  ["图层", <Ico w={28} h={28}><path d="M14 2L26 10L14 18L2 10ZM4 16L2 18L14 26L26 18L24 16" /></Ico>],
  ["页面", <Ico w={26} h={28}><path d="M2 2H18L24 8V26H2Z" /><path d="M17 2V8H24" fill={INK} /><path d="M7 14H7.100M12 14H19M7 20H7.100M12 20H19" /></Ico>],
  ["图表", <Ico w={28} h={28} s={2.6}><path d="M2 2V26H26" /><path d="M8 17L15 9L22 17" strokeWidth={2} /><circle cx={15} cy={8} r={2} fill={INK} /><circle cx={8} cy={18} r={2} fill={INK} /><circle cx={22} cy={18} r={2} fill={INK} /></Ico>],
  ["表格", <Ico w={28} h={28}><rect x={2} y={2} width={23} height={23} rx={1} /><path d="M2 10H25M2 17H25M10 10V25M17 10V25" /></Ico>],
  ["平面图", <Ico w={28} h={28} s={2.8}><path d="M2 3H17V8H25V25H2Z" /><path d="M17 8V11M2 10H6Q9 10 9 7M2 17H8Q11 17 11 20V24M18 24V18" /></Ico>],
  ["甘特图", <Ico w={28} h={28}><path d="M2 6V3H26V6" /><path d="M6 13H14M16 24H24" strokeWidth={4} /><path d="M14 12H22V22" strokeWidth={1.500} /></Ico>],
  [
    "思维导图",
    <Ico w={28} h={28} s={2}>
      <path d="M6 5Q11 5 11 13.500T6 22M22 5Q17 5 17 13.500T22 22" />
      <g fill={INK} strokeWidth={1}>
        <rect x={1} y={3} width={6} height={5} rx={1} />
        <rect x={21} y={3} width={6} height={5} rx={1} />
        <rect x={1} y={20} width={6} height={5} rx={1} />
        <rect x={21} y={20} width={6} height={5} rx={1} />
        <rect x={10} y={12} width={8} height={4} rx={1} />
      </g>
    </Ico>,
  ],
];

const SideRail = () => (
  <Rail>
    <RailToggle aria-label="收起面板"><Ico w={28} h={28} c={SOFT} s={2}><path d="M1 1L13 14L1 27M15 1L27 14L15 27" /></Ico></RailToggle>
    {railIcons.map(([name, art], i) => (
      <RailButton key={name} $on={i === 0} aria-label={name}>{art}</RailButton>
    ))}
  </Rail>
);

const InspectorPanel = () => (
  <Inspector>
    <InspectorTabs>
      <InspectorTab $on>填充</InspectorTab>
      <InspectorTab $edge>线条</InspectorTab>
      <InspectorTab>阴影</InspectorTab>
    </InspectorTabs>
    <FillOptions aria-label="填充">
      {["无填充", "单色填充", "渐变填充", "单色渐变填充", "图案填充", "图片或纹理填充"].map((t, i) => (
        <FillOption key={t}>
          <Radio type="radio" name="fill" defaultChecked={i === 0} />
          {t}
        </FillOption>
      ))}
    </FillOptions>
  </Inspector>
);

const Status = () => (
  <StatusBar>
    <StatusSide>
      <IconButton $w={34} aria-label="页面视图">
        <Ico w={34} h={20}><rect x={8} y={3} width={18} height={14} /><path d="M2 2V18M32 2V18" stroke={SOFT} strokeWidth={2} /></Ico>
      </IconButton>
      <PageSelect>
        <PageField aria-label="页面"><option>页-1</option></PageField>
        <Caret w={11} h={8} />
      </PageSelect>
      <PageTab>页-1</PageTab>
      <button aria-label="新增页面"><Ico w={18} h={18}><path d="M9 3V15M3 9H15" /></Ico></button>
    </StatusSide>
    <StatusSide>
      <ShapeId>形状 ID：147</ShapeId>
      <IconButton $w={54} aria-label="演示">
        <Ico w={26} h={26} s={2.6}><circle cx={13} cy={13} r={11} /><path d="M9 8L19 13L9 18Z" fill={SOFT} stroke="none" /></Ico>
      </IconButton>
      <IconButton $w={18} aria-label="缩小"><Ico w={18} h={18}><path d="M3 9H15" /></Ico></IconButton>
      <ZoomSlider type="range" min={0} max={100} defaultValue={23} aria-label="缩放" />
      <button aria-label="放大"><Ico w={18} h={18}><path d="M9 3V15M3 9H15" /></Ico></button>
      <ZoomButton>100%<Caret /></ZoomButton>
      <IconButton $w={24} aria-label="全屏"><Ico w={24} h={24}><path d="M2 8V2H8M16 2H22V8M22 16V22H16M8 22H2V16" /></Ico></IconButton>
      <IconButton $w={46} aria-label="适应宽度">
        <Ico w={26} h={26}><rect x={2} y={2} width={22} height={22} /><path d="M7 13H19M9 10L6 13L9 16M17 10L20 13L17 16" strokeWidth={2} /></Ico>
      </IconButton>
    </StatusSide>
  </StatusBar>
);

export default function App() {
  return (
    <Shell>
      <GlobalStyle />
      <Header />
      <RibbonBar />
      <Workspace>
        <LibraryPanel />
        <EditorPanel />
        <SideRail />
        <InspectorPanel />
      </Workspace>
      <Status />
    </Shell>
  );
}
